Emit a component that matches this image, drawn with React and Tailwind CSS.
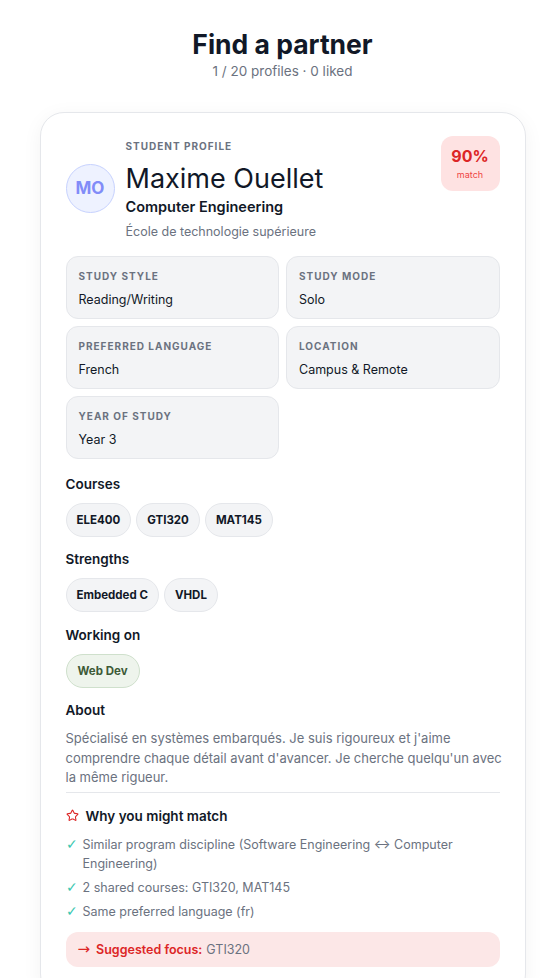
import { Star } from "lucide-react";

const INFO = [
  { label: "Study style", value: "Reading/Writing" },
  { label: "Study mode", value: "Solo" },
  { label: "Preferred language", value: "French" },
  { label: "Location", value: "Campus & Remote" },
  { label: "Year of study", value: "Year 3" },
];

const REASONS = [
  "Similar program discipline (Software Engineering \u2194 Computer Engineering)",
  "2 shared courses: GTI320, MAT145",
  "Same preferred language (fr)",
];

function Chip({ children, green }) {
  return (
    <span
      className={
        green
          ? "rounded-full border border-[#cfe0cc] bg-[#eef4ec] px-[11px] py-[8px] text-[11.5px] font-bold leading-[16px] text-[#3d5a37]"
          : "rounded-full border border-[#e5e7eb] bg-[#f3f4f6] px-[10px] py-[8px] text-[11.5px] font-bold leading-[16px] text-[#111827]"
      }
    >
      {children}
    </span>
  );
}

function Section({ title, className, children }) {
  return (
    <div className={className}>
      <h3 className="text-[13.5px] font-semibold leading-[20px] text-[#111827]">{title}</h3>
      <div className="mt-[9px] flex flex-wrap gap-[5px]">{children}</div>
    </div>
  );
}

export default function App() {
  return (
    <div className="min-h-screen bg-white pl-[10px] font-['Inter',sans-serif]">
      <div className="pt-[28px] text-center">
        <h1 className="text-[26.5px] font-bold leading-[33px] text-[#111827]">Find a partner</h1>
        <p className="mt-[1px] text-[13.5px] leading-[18px] text-[#6b7280]">1 / 20 profiles · 0 liked</p>
      </div>

      <div className="mx-auto mt-[32px] w-[486px] rounded-[24px] border border-[#e5e7eb] bg-white px-[25px] pb-[30px] pt-[26px] shadow-[0_4px_20px_rgba(0,0,0,0.05)]">
        <div className="flex items-start">
          <div className="mt-[25px] flex h-[49px] w-[49px] shrink-0 items-center justify-center rounded-full border border-[#c7d2fe] bg-[#eef2ff] text-[17px] font-bold text-[#818cf8]">
            MO
          </div>
          <div className="ml-[11px] flex-1">
            <div className="text-[10px] font-bold uppercase leading-[15px] tracking-[0.1em] text-[#6b7280]">Student profile</div>
            <div className="mt-[8px] text-[27px] leading-[34px] text-[#111827]">Maxime Ouellet</div>
            <div className="mt-[1px] text-[14.5px] font-semibold leading-[20px] text-[#111827]">Computer Engineering</div>
            <div className="mt-[5px] text-[12.5px] leading-[20px] text-[#6b7280]">École de technologie supérieure</div>
          </div>
          <div className="-mt-[3px] flex h-[55px] w-[59px] flex-col items-center justify-center rounded-[12px] bg-[#fee2e2]">
            <div className="text-[16px] font-bold leading-[20px] text-[#dc2626]">90%</div>
            <div className="mt-[3px] text-[9px] leading-[12px] text-[#ef4444]">match</div>
          </div>
        </div>

        <div className="mt-[14px] grid grid-cols-2 gap-[7px]">
          {INFO.map((item) => (
            <div key={item.label} className="rounded-[12px] border border-[#e5e7eb] bg-[#f3f4f6] px-[12px] pb-[8px] pt-[12px]">
              <div className="text-[10px] font-bold uppercase leading-[15px] tracking-[0.1em] text-[#6b7280]">{item.label}</div>
              <div className="mt-[6px] text-[12.5px] leading-[20px] text-[#111827]">{item.value}</div>
            </div>
          ))}
        </div>

        <Section title="Courses" className="mt-[15px]">
          <Chip>ELE400</Chip>
          <Chip>GTI320</Chip>
          <Chip>MAT145</Chip>
        </Section>
        <Section title="Strengths" className="mt-[12px]">
          <Chip>Embedded C</Chip>
          <Chip>VHDL</Chip>
        </Section>
        <Section title="Working on" className="mt-[13px]">
          <Chip green>Web Dev</Chip>
        </Section>

        <div className="mt-[12px]">
          <h3 className="text-[13.5px] font-semibold leading-[20px] text-[#111827]">About</h3>
          <p className="-mr-[6px] mt-[9px] text-[13px] leading-[19.5px] text-[#6b7280]">
            Spécialisé en systèmes embarqués. Je suis rigoureux et j'aime comprendre chaque détail avant d'avancer. Je cherche quelqu'un avec la même rigueur.
          </p>
        </div>

        <div className="mt-[4px] border-t border-[#e5e7eb] pt-[13px]">
          <div className="flex items-center gap-[7px]">
            <Star className="h-[13px] w-[13px] text-[#dc2626]" strokeWidth={2} />
            <span className="text-[13.5px] font-semibold leading-[20px] text-[#111827]">Why you might match</span>
          </div>
          <ul className="mt-[9px] flex flex-col gap-[5px]">
            {REASONS.map((r) => (
              <li key={r} className="flex text-[12.5px] leading-[19px] text-[#6b7280]">
                <span className="w-[17px] shrink-0 font-['DejaVu_Sans',sans-serif] text-[14px] font-light leading-[19px] text-[#3cc7b0]">✓</span>
                <span>{r}</span>
              </li>
            ))}
          </ul>
          <div className="mt-[11px] flex items-center rounded-[12px] bg-[#fce7e7] px-[12px] py-[8px] text-[12.5px] leading-[19px]">
            <span className="mr-[6px] font-['DejaVu_Sans',sans-serif] text-[15px] leading-[19px] text-[#dc2626]">→</span>
            <span className="font-semibold text-[#dc2626]">Suggested focus:</span>
            <span className="ml-[4px] text-[#6b7280]">GTI320</span>
          </div>
        </div>
      </div>
    </div>
  );
}
